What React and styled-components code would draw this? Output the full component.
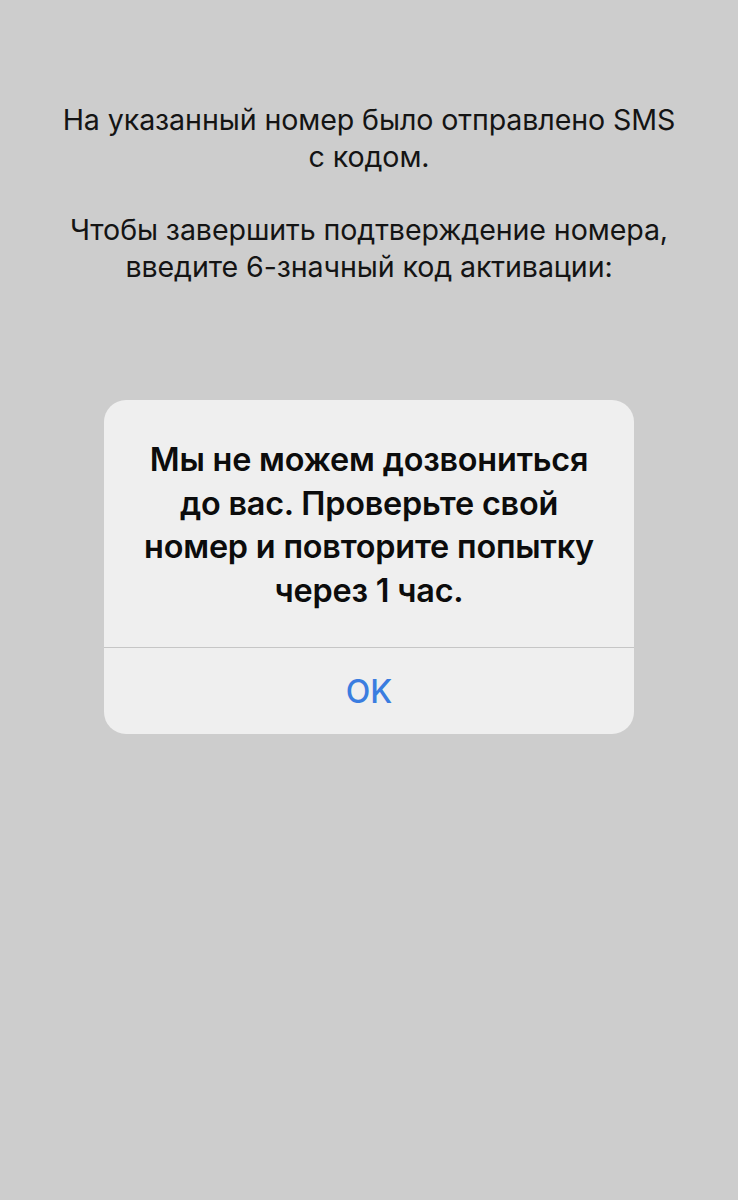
import styled, { createGlobalStyle } from "styled-components";

const GlobalStyle = createGlobalStyle`
  html, body {
    margin: 0;
    padding: 0;
    background: #cdcdcd;
  }
  body {
    font-family: Inter, "Noto Sans", "Liberation Sans", sans-serif;
    -webkit-font-smoothing: antialiased;
  }
`;

const Screen = styled.div`
  width: 738px;
  height: 1200px;
  background: #cdcdcd;
  display: flex;
  flex-direction: column;
  align-items: center;
  padding-top: 101px;
  box-sizing: border-box;
`;

const Message = styled.div`
  display: flex;
  flex-direction: column;
  gap: 36px;
  text-align: center;
  color: #141414;
  font-size: 28.6px;
  line-height: 37px;
  font-weight: 400;
  letter-spacing: -0.1px;
`;

const Paragraph = styled.p`
  margin: 0;
`;

const Alert = styled.div`
  margin-top: 115px;
  width: 530px;
  background: #efefef;
  border-radius: 22px;
  overflow: hidden;
  display: flex;
  flex-direction: column;
`;

const AlertTitle = styled.div`
  padding: 38px 20px 35px;
  text-align: center;
  color: #0c0c0c;
  font-size: 32.4px;
  line-height: 43.5px;
  font-weight: 600;
  letter-spacing: -0.2px;
  border-bottom: 1.5px solid #c6c6c6;
`;

const AlertButton = styled.button`
  height: 86px;
  border: none;
  background: transparent;
  color: #3a7de0;
  font-family: inherit;
  font-size: 32px;
  font-weight: 500;
  cursor: pointer;
`;

export default function App() {
  return (
    <>
      <GlobalStyle />
      <Screen>
        <Message>
          <Paragraph>
            На указанный номер было отправлено SMS
            <br />с кодом.
          </Paragraph>
          <Paragraph>
            Чтобы завершить подтверждение номера,
            <br />
            введите 6-значный код активации:
          </Paragraph>
        </Message>
        <Alert>
          <AlertTitle>
            Мы не можем дозвониться
            <br />
            до вас. Проверьте свой
            <br />
            номер и повторите попытку
            <br />
            через 1 час.
          </AlertTitle>
          <AlertButton>OK</AlertButton>
        </Alert>
      </Screen>
    </>
  );
}
